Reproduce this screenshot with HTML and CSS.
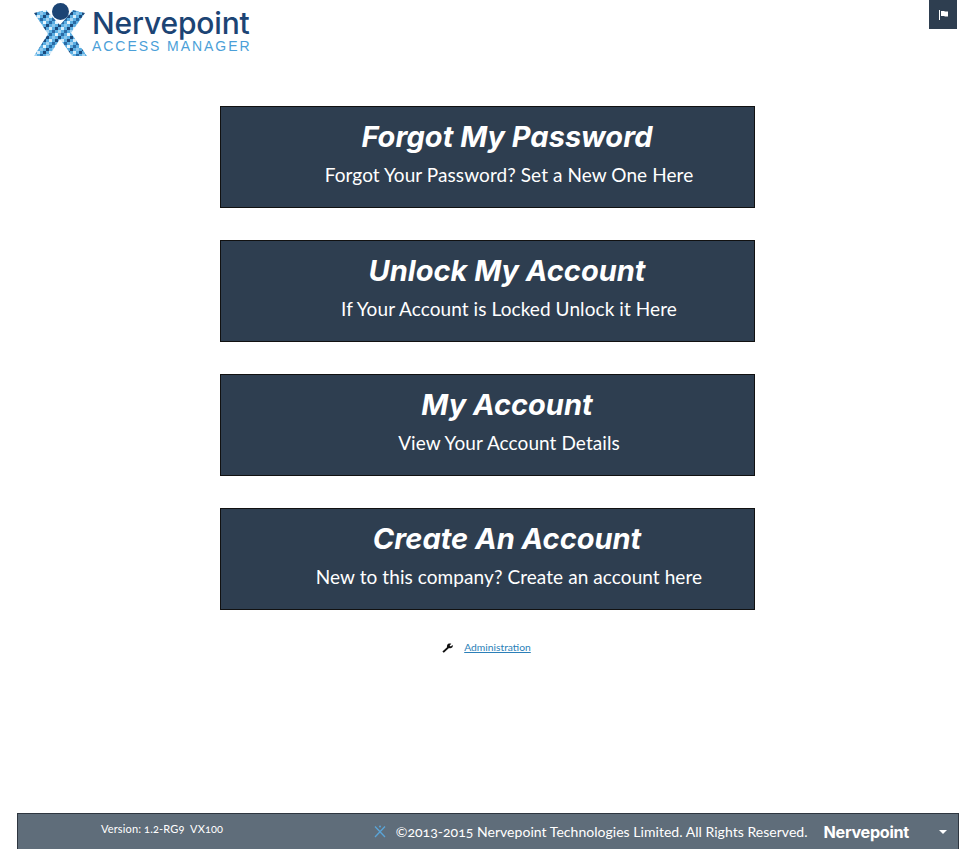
FILE: index.html
```html
<!DOCTYPE html>
<html lang="en">
<head>
<meta charset="utf-8">
<title>Nervepoint Access Manager</title>
<link rel="stylesheet" href="styles.css">
</head>
<body>
<div class="page">
  <header class="top">
    <a class="logo" href="#" aria-label="Nervepoint Access Manager">
      <svg class="logo-mark" width="56" height="58" viewBox="0 0 56 58">
        <defs>
          <pattern id="px" width="12" height="12" patternUnits="userSpaceOnUse">
            <rect width="12" height="12" fill="#5aaee2"/>
            <rect width="3" height="3" fill="#1d4a7c"/>
            <rect x="3" y="3" width="3" height="3" fill="#d6ecfa"/>
            <rect x="6" y="0" width="3" height="3" fill="#8cc6ec"/>
            <rect x="9" y="3" width="3" height="3" fill="#1d4a7c"/>
            <rect x="0" y="6" width="3" height="3" fill="#a5d3f0"/>
            <rect x="6" y="6" width="3" height="3" fill="#2a6ba6"/>
            <rect x="3" y="9" width="3" height="3" fill="#2a6ba6"/>
            <rect x="9" y="9" width="3" height="3" fill="#e6f4fc"/>
          </pattern>
        </defs>
        <polygon points="0,13 12,10 26,25 39,10 51,13 37,33 53,56 38,56 26,39 15,56 0,56 14,34" fill="url(#px)"/>
        <circle cx="26.500" cy="11.500" r="8.500" fill="#1c4474"/>
      </svg>
      <span class="logo-text">
        <span class="logo-name">Nervepoint</span>
        <span class="logo-sub">ACCESS MANAGER</span>
      </span>
    </a>
    <button class="flag-btn" aria-label="Language">
      <svg width="12" height="12" viewBox="0 0 12 12"><rect x="1" y="1" width="1" height="10" fill="#fff"/><path d="M3 2h3l1 .5h3v5H7l-1-.5H3z" fill="#fff"/></svg>
    </button>
  </header>

  <main class="menu">
    <a class="card" href="#"><h2>Forgot My Password</h2><p>Forgot Your Password? Set a New One Here</p></a>
    <a class="card" href="#"><h2>Unlock My Account</h2><p>If Your Account is Locked Unlock it Here</p></a>
    <a class="card" href="#"><h2>My Account</h2><p>View Your Account Details</p></a>
    <a class="card" href="#"><h2>Create An Account</h2><p>New to this company? Create an account here</p></a>
    <div class="admin">
      <svg width="12" height="12" viewBox="0 0 12 12"><path d="M1.800 11.800 0.400 10.400 5 6.200C4.700 4.800 5.300 3.200 6.900 2.600c.8-.3 1.700-.2 2.400.2L7.600 4.400l1.200 1.200 1.800-1.600c.4.900.2 1.900-.5 2.600-.9.800-2.100 1-3.100.5z" fill="#111"/></svg>
      <a href="#">Administration</a>
    </div>
  </main>

  <footer class="foot">
    <span class="version">Version: 1.2-RG9&nbsp; VX100</span>
    <span class="foot-right">
      <svg class="foot-icon" width="12" height="13" viewBox="0 0 12 13"><path d="M1 1.500 11 12M11 1.500 1 12" stroke="#5aa5d8" stroke-width="1.300" fill="none"/><circle cx="6" cy="1.500" r="1" fill="#5aa5d8"/></svg>
      <span class="copy">©2013-2015 Nervepoint Technologies Limited. All Rights Reserved.</span>
      <span class="brand">Nervepoint</span>
      <span class="caret"></span>
    </span>
  </footer>
</div>
</body>
</html>
```
FILE: styles.css
```css
* { box-sizing: border-box; }
html, body { margin: 0; height: 100%; }
body { background: #fff; font-family: Lato, "Liberation Sans", sans-serif; color: #111; overflow: hidden; }
.page { min-height: 849px; height: 100vh; display: flex; flex-direction: column; padding: 0 18px 0 17px; }
.top { height: 106px; display: flex; justify-content: space-between; align-items: flex-start; flex: none; }
.logo { display: flex; align-items: flex-start; margin-left: 17px; text-decoration: none; gap: 2px; }
.logo-mark { display: block; }
.logo-text { display: flex; flex-direction: column; gap: 2px; padding-top: 9px; }
.logo-name { font: 500 30px/28px Inter, "Liberation Sans", sans-serif; color: #1c4474; letter-spacing: -0.15px; }
.logo-sub { font: 400 14px/15px "Liberation Sans", sans-serif; color: #4b9fd8; letter-spacing: 1.950px; white-space: nowrap; }
.flag-btn { width: 28px; height: 29px; margin-right: 2px; padding: 0 0 0 2px; border: 0; background: #2e3e50; display: flex; align-items: center; justify-content: center; }
.menu { flex: 1; display: flex; flex-direction: column; align-items: center; gap: 32px; padding-right: 1px; }
.card { display: block; width: 535px; height: 102px; background: #2e3e50; border: 1px solid #111; color: #fff; text-align: center; text-decoration: none; padding-top: 12px; padding-left: 39px; }
.card h2 { margin: 0; font-family: Inter, Lato, sans-serif; font-size: 29px; line-height: 36px; font-weight: 700; font-style: italic; }
.card p { margin: 7px 0 0 4px; font-size: 19px; line-height: 26px; letter-spacing: 0.08px; }
.admin { display: flex; align-items: center; gap: 10px; font-size: 10.300px; margin-top: -3px; padding-right: 2px; height: 16px; }
.admin a { color: #2b7fb8; }
.foot { flex: none; height: 36px; background: #5f6d7a; border: 1px solid #2e3640; border-bottom: 0; color: #fff; display: flex; justify-content: space-between; align-items: center; }
.version { font-size: 11px; margin-left: 83px; margin-top: -6px; letter-spacing: 0.15px; font-variant-numeric: oldstyle-nums; }
.foot-right { display: flex; align-items: center; }
.copy { font-size: 14px; margin-left: 10px; letter-spacing: 0.035px; font-variant-numeric: oldstyle-nums; }
.brand { margin-left: 16px; font-family: Inter, Lato, sans-serif; font-size: 16.200px; font-weight: 700; letter-spacing: -0.3px; }
.caret { width: 0; height: 0; border: 4px solid transparent; border-top-color: #fff; border-bottom: 0; margin: 0 11px 0 30px; }
```
